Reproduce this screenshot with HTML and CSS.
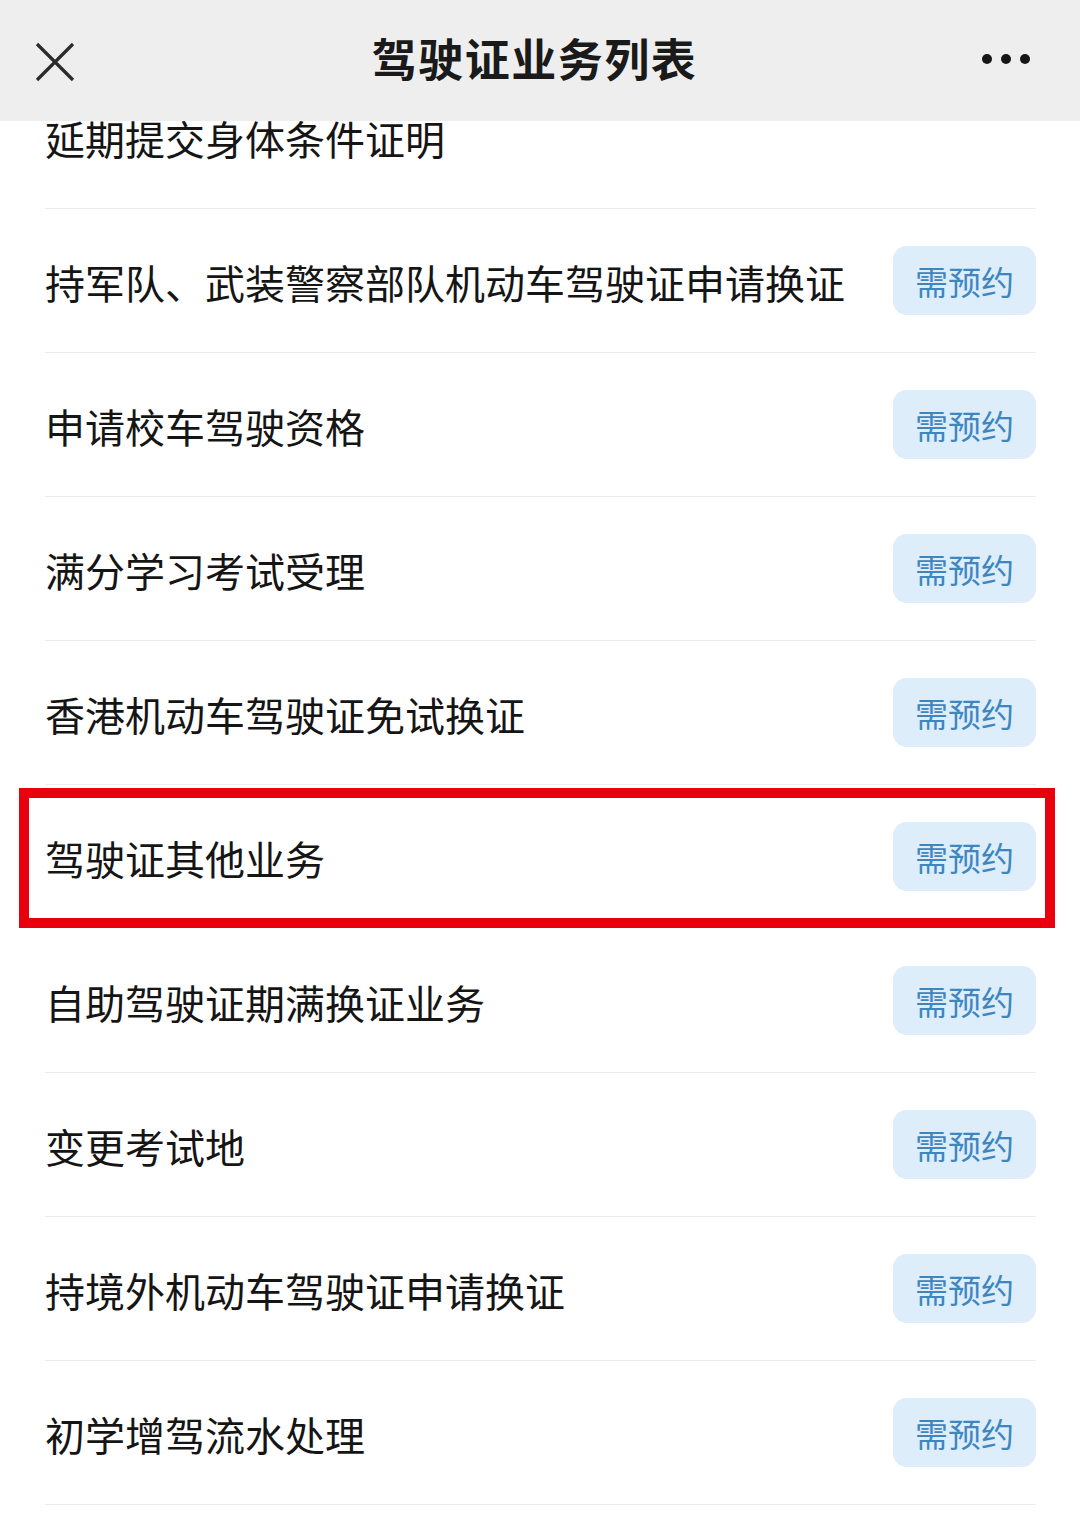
FILE: index.html
```html
<!DOCTYPE html>
<html lang="zh-CN">
<head>
    <meta charset="UTF-8">
    <meta name="viewport" content="width=device-width, initial-scale=1.0">
    <title>驾驶证业务列表</title>
    <link rel="stylesheet" href="styles.css">
</head>
<body>
    <div class="header">
        <div class="close-btn">
            <svg width="40" height="40" viewBox="0 0 40 40">
                <path d="M2 2 L38 38 M38 2 L2 38" stroke="#2b2b2b" stroke-width="3.2" stroke-linecap="butt"/>
            </svg>
        </div>
        <div class="title">驾驶证业务列表</div>
        <div class="more-btn">
            <span class="dot"></span><span class="dot"></span><span class="dot"></span>
        </div>
    </div>

    <div class="viewport">
        <ul class="biz-list">
            <li class="biz-item"><span class="biz-name">延期提交身体条件证明</span></li>
            <li class="biz-item"><span class="biz-name">持军队、武装警察部队机动车驾驶证申请换证</span><span class="tag">需预约</span></li>
            <li class="biz-item"><span class="biz-name">申请校车驾驶资格</span><span class="tag">需预约</span></li>
            <li class="biz-item"><span class="biz-name">满分学习考试受理</span><span class="tag">需预约</span></li>
            <li class="biz-item"><span class="biz-name">香港机动车驾驶证免试换证</span><span class="tag">需预约</span></li>
            <li class="biz-item marked"><span class="biz-name">驾驶证其他业务</span><span class="tag">需预约</span><span class="mark-box"></span></li>
            <li class="biz-item"><span class="biz-name">自助驾驶证期满换证业务</span><span class="tag">需预约</span></li>
            <li class="biz-item"><span class="biz-name">变更考试地</span><span class="tag">需预约</span></li>
            <li class="biz-item"><span class="biz-name">持境外机动车驾驶证申请换证</span><span class="tag">需预约</span></li>
            <li class="biz-item"><span class="biz-name">初学增驾流水处理</span><span class="tag">需预约</span></li>
        </ul>
    </div>
</body>
</html>
```

FILE: styles.css
```css
body {
    margin: 0;
    background: #ffffff;
    font-family: "Noto Sans CJK SC", "Noto Sans", sans-serif;
    color: #151515;
    width: 1080px;
    height: 1530px;
    overflow: hidden;
}
.header {
    height: 121px;
    box-sizing: border-box;
    padding: 0 50px 6px 35px;
    background: #eeeeee;
    display: flex;
    align-items: center;
    justify-content: space-between;
    position: relative;
    z-index: 2;
}
.close-btn {
    width: 40px;
    height: 40px;
    margin-top: 8px;
}
.close-btn svg {
    display: block;
}
.title {
    font-size: 45px;
    font-weight: 700;
    color: #1a1a1a;
    letter-spacing: 1.5px;
    margin-left: 12px;
}
.more-btn {
    display: flex;
    gap: 9px;
    margin-top: 2px;
}
.dot {
    width: 10px;
    height: 10px;
    border-radius: 50%;
    background: #161616;
}
.viewport {
    height: 1409px;
    overflow: hidden;
}
.biz-list {
    list-style: none;
    margin: -56px 0 0 0;
    padding: 0;
}
.biz-item {
    height: 143px;
    margin: 0 44px 0 45px;
    border-bottom: 1px solid #ececec;
    display: flex;
    align-items: center;
    justify-content: space-between;
    position: relative;
}
.biz-name {
    font-size: 40px;
    line-height: 48px;
    margin-top: 2px;
}
.tag {
    width: 143px;
    height: 69px;
    border-radius: 14px;
    background: #ddedfa;
    color: #3f86bf;
    font-size: 33px;
    display: flex;
    align-items: center;
    justify-content: center;
}
.marked {
    border-bottom-color: transparent;
}
.mark-box {
    position: absolute;
    left: -26px;
    right: -19px;
    top: 3px;
    bottom: 0;
    border: 10px solid #e8000f;
}
```
